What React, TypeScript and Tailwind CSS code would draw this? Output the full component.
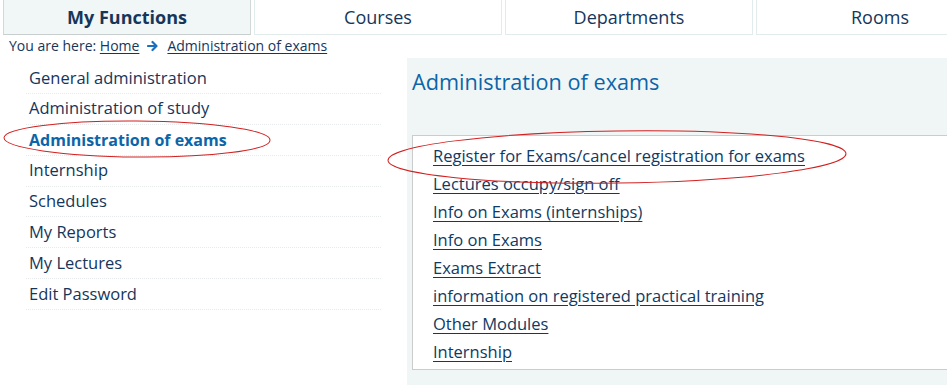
import React from "react";

const navItems = [
  "General administration",
  "Administration of study",
  "Administration of exams",
  "Internship",
  "Schedules",
  "My Reports",
  "My Lectures",
  "Edit Password",
];

const links = [
  "Register for Exams/cancel registration for exams",
  "Lectures occupy/sign off",
  "Info on Exams (internships)",
  "Info on Exams",
  "Exams Extract",
  "information on registered practical training",
  "Other Modules",
  "Internship",
];

export default function App() {
  return (
    <div
      className="relative w-[947px] h-[385px] overflow-hidden bg-white text-[#14365a]"
      style={{ fontFamily: '"Open Sans", "Noto Sans", sans-serif' }}
    >
      {/* Tabs */}
      <div className="flex gap-[3px] pl-[3px] h-[35px] w-[1100px]">
        <div className="w-[248px] shrink-0 -mt-[2px] bg-[#f1f6f6] border border-[#d2d8d8] border-b-[#c9cfcf] flex items-center justify-center text-[18px] font-bold text-[#16365a] pt-[1px]">
          My Functions
        </div>
        {["Courses", "Departments", "Rooms"].map((t) => (
          <div
            key={t}
            className="w-[248px] shrink-0 -mt-[2px] bg-white border border-[#e3ecec] flex items-center justify-center text-[18px] text-[#16365a] pt-[1px]"
          >
            {t}
          </div>
        ))}
      </div>

      {/* Breadcrumb */}
      <div className="flex items-center pl-[9px] h-[22px] text-[14px] text-[#16365a] leading-none">
        <span>You are here:&nbsp;</span>
        <span className="underline underline-offset-2">Home</span>
        <svg width="12" height="12" viewBox="0 0 12 12" className="mx-[8px]">
          <path d="M1 6h8M5.5 2l4 4-4 4" stroke="#1c6fbf" strokeWidth="2.2" fill="none" strokeLinecap="round" strokeLinejoin="round" />
        </svg>
        <span className="underline underline-offset-2">Administration of exams</span>
      </div>

      <div className="flex">
        {/* Left nav */}
        <div className="ml-[26px] w-[355px] shrink-0 pt-[6px]">
          {navItems.map((item) => (
            <div
              key={item}
              className={`h-[30.9px] flex items-center pl-[3px] border-b border-dotted border-[#e6eaea] ${
                item === "Administration of exams"
                  ? "font-bold text-[16px] text-[#0c65a8]"
                  : "text-[16.5px] text-[#14365a]"
              }`}
            >
              {item}
            </div>
          ))}
        </div>

        {/* Right panel */}
        <div className="ml-[26px] flex-1 bg-[#f0f6f6] pl-[5px] pt-[10px] mt-[1px] h-[330px]">
          <div className="text-[21.7px] leading-[28px] text-[#0c65a8] h-[67px]">Administration of exams</div>
          <div className="bg-white border border-[#cccccc] border-r-0 pl-[20px] pt-[6px] pb-[3px]">
            {links.map((l) => (
              <div key={l} className="h-[28px] flex items-center text-[16.5px] text-[#0e3a63] underline underline-offset-[3px]">
                {l}
              </div>
            ))}
          </div>
        </div>
      </div>

      {/* Annotation ellipses */}
      <svg className="absolute left-0 top-0 pointer-events-none" width="947" height="385">
        <ellipse cx="137" cy="139" rx="133" ry="18" fill="none" stroke="#d21f1f" strokeWidth="1" transform="rotate(0.5 137 139)" />
        <ellipse cx="617" cy="157" rx="229" ry="26" fill="none" stroke="#d21f1f" strokeWidth="1" transform="rotate(-0.8 617 157)" />
      </svg>
    </div>
  );
}
